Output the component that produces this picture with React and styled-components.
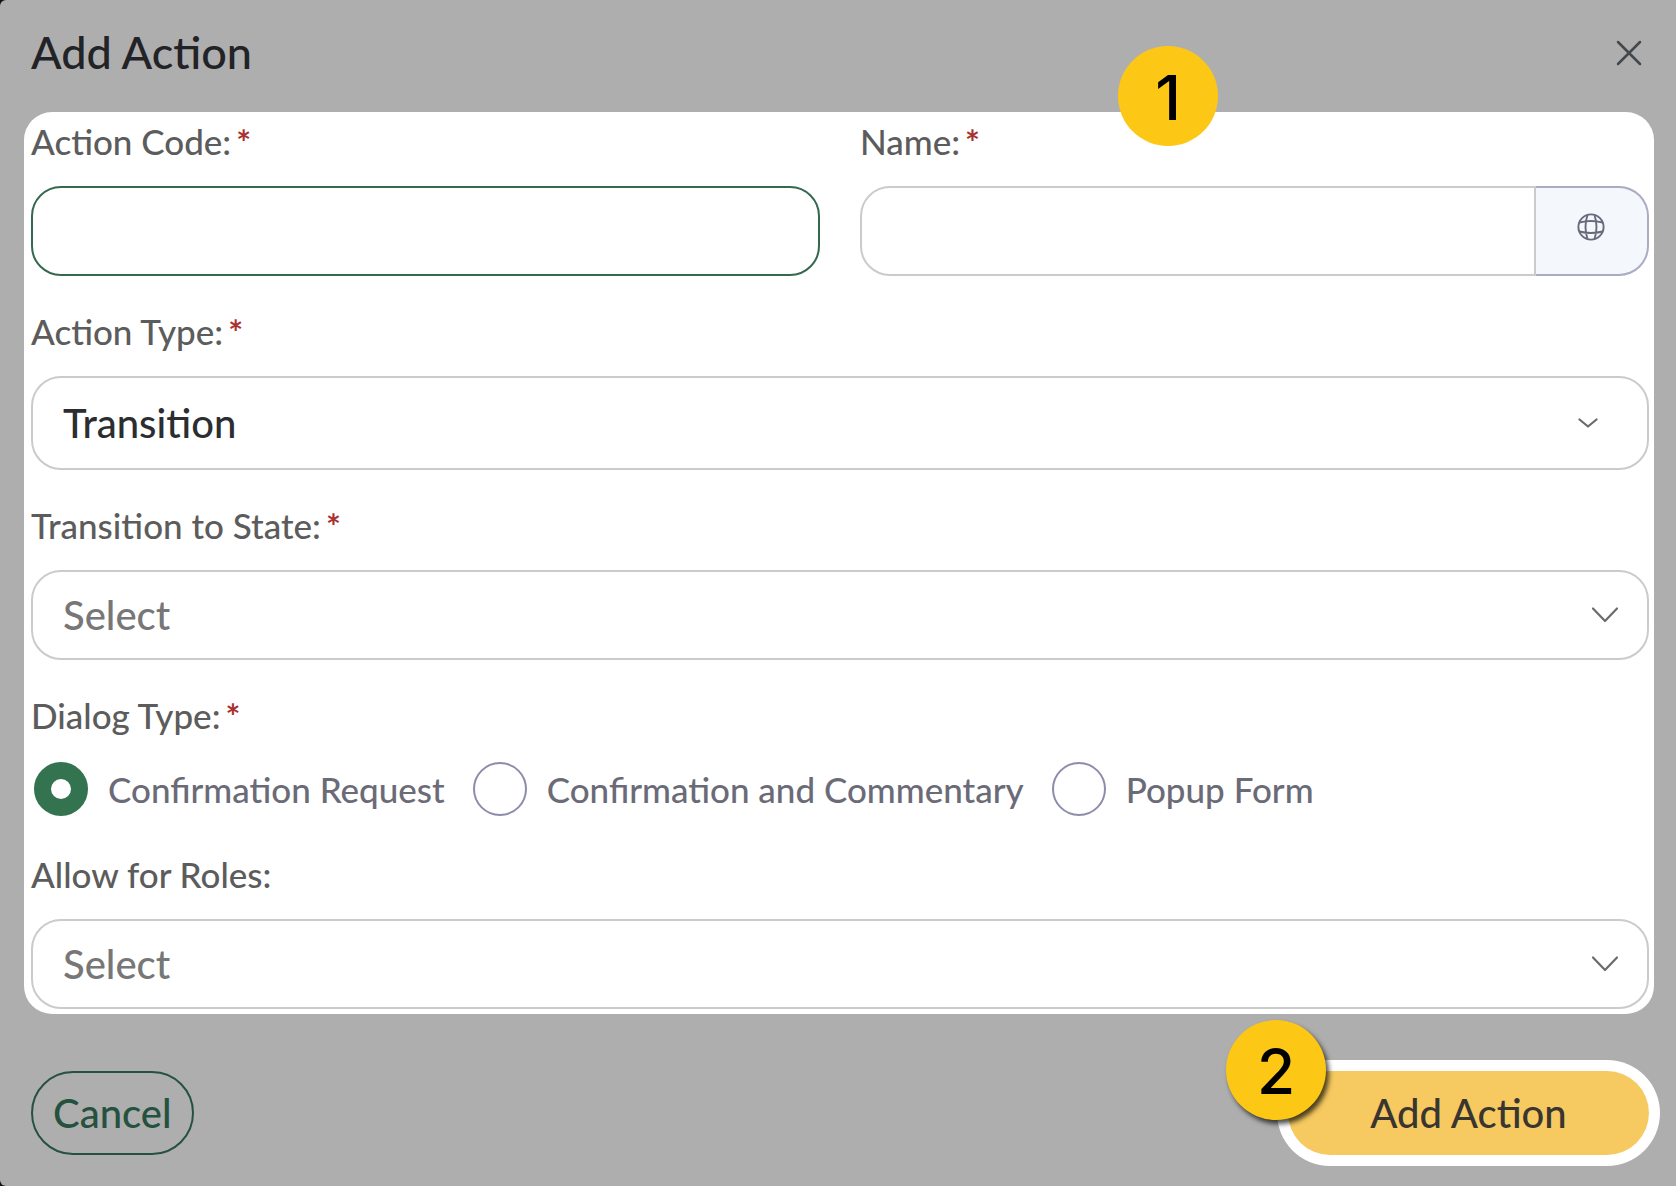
import React, { useState } from "react";
import styled, { createGlobalStyle } from "styled-components";

const dialogTypes = [
  { value: "request", label: "Confirmation Request" },
  { value: "commentary", label: "Confirmation and Commentary" },
  { value: "popup", label: "Popup Form" },
];

const GlobalStyle = createGlobalStyle`
  *, *::before, *::after {
    box-sizing: border-box;
  }
  body {
    margin: 0;
    background: #0b1613;
    font-family: Lato, "Open Sans", sans-serif;
  }
  button, input, select {
    font-family: inherit;
    margin: 0;
  }
`;

const Dialog = styled.form`
  display: flex;
  flex-direction: column;
  min-height: 100vh;
  background: #aeaeae;
  border-radius: 6px 0 0 6px;
`;

const Header = styled.header`
  display: flex;
  align-items: center;
  justify-content: space-between;
  padding: 24px 30px 32px 31px;
`;

const Title = styled.h1`
  margin: 0;
  color: #222326;
  font-size: 45px;
  font-weight: 500;
  line-height: 56px;
`;

const CloseButton = styled.button`
  display: flex;
  padding: 5px 4px 4px;
  border: 0;
  background: none;
  color: #43484d;
  cursor: pointer;
`;

const Panel = styled.section`
  position: relative;
  display: flex;
  flex-direction: column;
  gap: 33px;
  margin: 0 22px 0 24px;
  padding: 7px 5px 5px 7px;
  border-radius: 28px;
  background: #fff;
`;

const Columns = styled.div`
  display: grid;
  grid-template-columns: 1fr 1fr;
  gap: 40px;
`;

const Field = styled.div`
  display: flex;
  flex-direction: column;
  gap: 23px;
  min-width: 0;
`;

const Label = styled.label`
  color: #5c5c5c;
  font-size: 35px;
  font-weight: 500;
  line-height: 44px;
`;

const Required = styled.span`
  margin-left: 5px;
  color: #a83232;
  font-weight: 700;
`;

const TextInput = styled.input`
  flex: 1;
  width: 100%;
  min-width: 0;
  height: 90px;
  padding: 0 30px;
  border: 2px solid ${(props) => (props.$active ? "#35694f" : "#cbcbcb")};
  border-radius: ${(props) => (props.$joined ? "30px 0 0 30px" : "30px")};
  background: #fff;
  color: #2b2d30;
  font-size: 40px;
  outline: none;
`;

const InputGroup = styled.div`
  display: flex;
`;

const LanguageButton = styled.button`
  display: flex;
  align-items: center;
  justify-content: center;
  width: 113px;
  height: 90px;
  padding: 0 2px 8px 0;
  border: 2px solid #acabc4;
  border-left: 0;
  border-radius: 0 30px 30px 0;
  background: #f4f7fb;
  color: #666a7b;
  cursor: pointer;
`;

const SelectBox = styled.div`
  display: grid;
  align-items: center;

  > * {
    grid-area: 1 / 1;
  }

  > svg {
    justify-self: end;
    margin-right: ${(props) => (props.$tall ? "51px" : "31px")};
    color: #6b6b6b;
    pointer-events: none;
  }
`;

const Select = styled.select`
  width: 100%;
  height: ${(props) => (props.$tall ? "94px" : "90px")};
  padding: 0 80px 0 30px;
  border: 2px solid #cbcbcb;
  border-radius: 30px;
  appearance: none;
  background: #fff;
  color: ${(props) => (props.$tall ? "#2b2d30" : "#777")};
  font-size: 40px;
  font-weight: 500;
  outline: none;
`;

const RadioGroup = styled.div`
  display: flex;
  flex-wrap: wrap;
  gap: 28px;
  padding: 2px 3px 3px;
`;

const RadioLabel = styled.label`
  display: flex;
  align-items: center;
  gap: 20px;
  color: #6b6b78;
  font-size: 35px;
  font-weight: 500;
  line-height: 44px;
  cursor: pointer;
`;

const Radio = styled.input`
  width: 54px;
  height: 54px;
  border: 2px solid #8c8cab;
  border-radius: 50%;
  appearance: none;
  background: #fff;

  &:checked {
    border: 17px solid #33734f;
  }
`;

const Footer = styled.footer`
  display: flex;
  justify-content: space-between;
  padding: 57px 27px 31px 31px;
`;

const Button = styled.button`
  height: 84px;
  padding: 0 20px;
  border: 2px solid #25513f;
  border-radius: 42px;
  background: none;
  color: #25513f;
  font-size: 40px;
  font-weight: 500;
  cursor: pointer;
`;

const PrimaryButton = styled(Button)`
  min-width: 361px;
  border: 0;
  background: #f6ca60;
  box-shadow: 0 0 0 11px #fff;
  color: #393530;
`;

const Highlight = styled.div`
  position: relative;
`;

const Badge = styled.span`
  position: absolute;
  display: flex;
  align-items: center;
  justify-content: center;
  width: 100px;
  height: 100px;
  padding-top: 4px;
  border-radius: 50%;
  background: #fdc716;
  color: #000;
  font-family: Inter, "Liberation Sans", sans-serif;
  font-size: 62px;
  font-weight: 500;
  line-height: 64px;
`;

const PanelBadge = styled(Badge)`
  top: -66px;
  right: 436px;
`;

const ButtonBadge = styled(Badge)`
  top: -51px;
  left: -62px;
  box-shadow: 3px 4px 5px rgba(0, 0, 0, 0.7);
`;

const CloseIcon = () => (
  <svg width="26" height="26" viewBox="0 0 26 26" fill="none" stroke="currentColor" strokeWidth="2.5" strokeLinecap="round" aria-hidden="true">
    <path d="M2 2 24 24M24 2 2 24" />
  </svg>
);

const GlobeIcon = () => (
  <svg width="28" height="28" viewBox="0 0 28 28" fill="none" stroke="currentColor" strokeWidth="1.9" aria-hidden="true">
    <circle cx="14" cy="14" r="12.6" />
    <path d="M10.5 2Q6.5 14 10.5 26M17.5 2Q21.5 14 17.5 26M2.5 9.5Q14 6.5 25.5 9.5M2.5 18.5Q14 21.5 25.5 18.5" />
  </svg>
);

const ChevronIcon = ({ small }) =>
  small ? (
    <svg width="20" height="10" viewBox="0 0 20 10" fill="none" stroke="currentColor" strokeWidth="2.2" strokeLinecap="round" strokeLinejoin="round" aria-hidden="true">
      <path d="m1.5 1.5 8.5 7 8.5-7" />
    </svg>
  ) : (
    <svg width="26" height="16" viewBox="0 0 26 16" fill="none" stroke="currentColor" strokeWidth="2.2" strokeLinecap="round" strokeLinejoin="round" aria-hidden="true">
      <path d="m1 1.5 12 12.5 12-12.5" />
    </svg>
  );

const FieldLabel = ({ children, required, ...rest }) => (
  <Label {...rest}>
    {children}
    {required && <Required>*</Required>}
  </Label>
);

const App = () => {
  const [code, setCode] = useState("");
  const [name, setName] = useState("");
  const [dialogType, setDialogType] = useState("request");

  const handleSubmit = (event) => {
    event.preventDefault();
  };

  return (
    <>
      <GlobalStyle />
      <Dialog onSubmit={handleSubmit}>
        <Header>
          <Title>Add Action</Title>
          <CloseButton type="button" aria-label="Close">
            <CloseIcon />
          </CloseButton>
        </Header>

        <Panel>
          <Columns>
            <Field>
              <FieldLabel htmlFor="code" required>Action Code:</FieldLabel>
              <TextInput id="code" type="text" $active value={code} onChange={(e) => setCode(e.target.value)} />
            </Field>
            <Field>
              <FieldLabel htmlFor="name" required>Name:</FieldLabel>
              <InputGroup>
                <TextInput id="name" type="text" $joined value={name} onChange={(e) => setName(e.target.value)} />
                <LanguageButton type="button" aria-label="Translations">
                  <GlobeIcon />
                </LanguageButton>
              </InputGroup>
            </Field>
          </Columns>

          <Field>
            <FieldLabel htmlFor="type" required>Action Type:</FieldLabel>
            <SelectBox $tall>
              <Select id="type" $tall>
                <option>Transition</option>
              </Select>
              <ChevronIcon small />
            </SelectBox>
          </Field>

          <Field>
            <FieldLabel htmlFor="state" required>Transition to State:</FieldLabel>
            <SelectBox>
              <Select id="state">
                <option>Select</option>
              </Select>
              <ChevronIcon />
            </SelectBox>
          </Field>

          <Field>
            <FieldLabel as="div" id="dialogType" required>Dialog Type:</FieldLabel>
            <RadioGroup role="radiogroup" aria-labelledby="dialogType">
              {dialogTypes.map((item) => (
                <RadioLabel key={item.value}>
                  <Radio
                    type="radio"
                    name="dialogType"
                    value={item.value}
                    checked={dialogType === item.value}
                    onChange={() => setDialogType(item.value)}
                  />
                  {item.label}
                </RadioLabel>
              ))}
            </RadioGroup>
          </Field>

          <Field>
            <FieldLabel htmlFor="roles">Allow for Roles:</FieldLabel>
            <SelectBox>
              <Select id="roles">
                <option>Select</option>
              </Select>
              <ChevronIcon />
            </SelectBox>
          </Field>

          <PanelBadge>1</PanelBadge>
        </Panel>

        <Footer>
          <Button type="button">Cancel</Button>
          <Highlight>
            <PrimaryButton type="submit">Add Action</PrimaryButton>
            <ButtonBadge>2</ButtonBadge>
          </Highlight>
        </Footer>
      </Dialog>
    </>
  );
};

export default App;
